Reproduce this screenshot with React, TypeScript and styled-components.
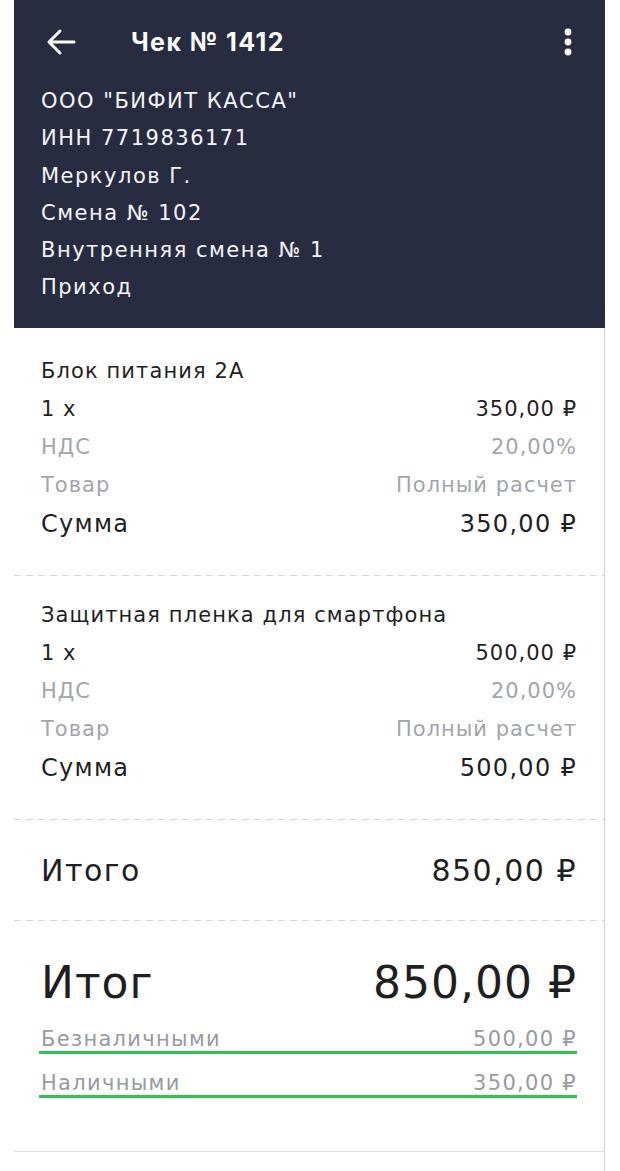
import React from "react";
import styled, { createGlobalStyle } from "styled-components";

const GlobalStyle = createGlobalStyle`
  html, body { margin: 0; padding: 0; background: #ffffff; }
  body { font-family: "DejaVu Sans", "Noto Sans", sans-serif; color: #1f1f1f; }
  * { box-sizing: border-box; }
`;

const Page = styled.div`
  width: 620px;
  min-height: 1171px;
  padding-left: 14px;
  display: flex;
  flex-direction: column;
`;

const Card = styled.div`
  width: 591px;
  display: flex;
  flex-direction: column;
  flex: 1;
`;

const Header = styled.header`
  background: #282c41;
  color: #ffffff;
  height: 328px;
  display: flex;
  flex-direction: column;
`;

const Toolbar = styled.div`
  height: 83px;
  display: flex;
  align-items: center;
  padding: 0 20px 0 30px;
`;

const IconButton = styled.button`
  width: 34px;
  height: 34px;
  border: 0;
  background: transparent;
  padding: 0;
  display: flex;
  align-items: center;
  justify-content: center;
  color: #ffffff;
  cursor: pointer;
`;

const Title = styled.h1`
  margin: 0 0 0 53px;
  font-family: "Inter", "DejaVu Sans", sans-serif;
  font-size: 25px;
  font-weight: 700;
  flex: 1;
  letter-spacing: 1.4px;
`;

const InfoList = styled.div`
  padding: 0 27px;
  display: flex;
  flex-direction: column;
`;

const InfoLine = styled.div`
  height: 37.3px;
  line-height: 37.3px;
  font-size: 21px;
  letter-spacing: 1.5px;
  color: #f4f5f8;
`;

const Body = styled.div`
  flex: 1;
  border-right: 1px solid #cfcfcf;
  display: flex;
  flex-direction: column;
`;

const Section = styled.section<{ $top: number; $bottom: number }>`
  padding: ${(p) => p.$top}px 27px ${(p) => p.$bottom}px;
  display: flex;
  flex-direction: column;
`;

const Dashed = styled.div`
  height: 1px;
  background-image: linear-gradient(to right, #d4d4d4 60%, transparent 60%);
  background-size: 12px 1px;
  background-repeat: repeat-x;
`;

const Row = styled.div<{ $size: number; $height: number; $muted?: boolean }>`
  display: flex;
  justify-content: space-between;
  align-items: center;
  height: ${(p) => p.$height}px;
  font-size: ${(p) => p.$size}px;
  letter-spacing: ${(p) => (p.$size > 21 ? 1.3 : 1)}px;
  color: ${(p) => (p.$muted ? "#a2a5ac" : "#1f1f1f")};
  white-space: nowrap;
`;

const ItemTitle = styled.div`
  height: 38px;
  line-height: 38px;
  font-size: 21px;
  letter-spacing: 1.1px;
  color: #1f1f1f;
`;

const TotalBlock = styled.div`
  height: 100px;
  padding: 0 27px;
  display: flex;
  align-items: center;
  justify-content: space-between;
  font-size: 30px;
  letter-spacing: 1.5px;
  color: #1f1f1f;
`;

const GrandBlock = styled.section`
  padding: 33px 27px 42px;
  display: flex;
  flex-direction: column;
`;

const GrandRow = styled.div`
  height: 56px;
  display: flex;
  align-items: center;
  justify-content: space-between;
  font-size: 44px;
  letter-spacing: 1px;
  color: #1f1f1f;
  margin-bottom: 11px;
`;

const PayRow = styled.div`
  height: 33px;
  display: flex;
  align-items: flex-end;
  justify-content: space-between;
  font-size: 21px;
  line-height: 1;
  padding-bottom: 1px;
  letter-spacing: 1.3px;
  color: #979aa2;
  border-bottom: 3px solid #2bc64e;
  margin: 0 0 11px -2px;
  padding-left: 2px;
`;

const BottomLine = styled.div`
  height: 1px;
  background: #dcdcdc;
`;

const BackIcon = () => (
  <svg width="30" height="30" viewBox="0 0 30 30" fill="none">
    <path d="M28 15H3M14 4L3 15l11 11" stroke="#fff" strokeWidth="3" strokeLinecap="round" strokeLinejoin="round" />
  </svg>
);

const MoreIcon = () => (
  <svg width="10" height="30" viewBox="0 0 10 30">
    <circle cx="5" cy="5" r="3.4" fill="#fff" />
    <circle cx="5" cy="15" r="3.4" fill="#fff" />
    <circle cx="5" cy="25" r="3.4" fill="#fff" />
  </svg>
);

type Item = { name: string; qty: string; price: string; vat: string; kind: string; mode: string; sum: string };

const items: Item[] = [
  { name: "Блок питания 2А", qty: "1 x", price: "350,00 ₽", vat: "20,00%", kind: "Товар", mode: "Полный расчет", sum: "350,00 ₽" },
  { name: "Защитная пленка для смартфона", qty: "1 x", price: "500,00 ₽", vat: "20,00%", kind: "Товар", mode: "Полный расчет", sum: "500,00 ₽" },
];

const info = ['ООО "БИФИТ КАССА"', "ИНН 7719836171", "Меркулов Г.", "Смена № 102", "Внутренняя смена № 1", "Приход"];

export default function App() {
  return (
    <>
      <GlobalStyle />
      <Page>
        <Card>
          <Header>
            <Toolbar>
              <IconButton aria-label="Назад"><BackIcon /></IconButton>
              <Title>Чек № 1412</Title>
              <IconButton aria-label="Меню"><MoreIcon /></IconButton>
            </Toolbar>
            <InfoList>
              {info.map((l) => (
                <InfoLine key={l}>{l}</InfoLine>
              ))}
            </InfoList>
          </Header>
          <Body>
            {items.map((it, i) => (
              <React.Fragment key={it.name}>
                <Section $top={i === 0 ? 24 : 20} $bottom={31}>
                  <ItemTitle>{it.name}</ItemTitle>
                  <Row $size={21} $height={38}><span>{it.qty}</span><span>{it.price}</span></Row>
                  <Row $size={21} $height={38} $muted><span>НДС</span><span>{it.vat}</span></Row>
                  <Row $size={21} $height={38} $muted><span>{it.kind}</span><span>{it.mode}</span></Row>
                  <Row $size={24} $height={40}><span>Сумма</span><span>{it.sum}</span></Row>
                </Section>
                <Dashed />
              </React.Fragment>
            ))}
            <TotalBlock><span>Итого</span><span>850,00 ₽</span></TotalBlock>
            <Dashed />
            <GrandBlock>
              <GrandRow><span>Итог</span><span>850,00 ₽</span></GrandRow>
              <PayRow><span>Безналичными</span><span>500,00 ₽</span></PayRow>
              <PayRow><span>Наличными</span><span>350,00 ₽</span></PayRow>
            </GrandBlock>
            <BottomLine />
          </Body>
        </Card>
      </Page>
    </>
  );
}
